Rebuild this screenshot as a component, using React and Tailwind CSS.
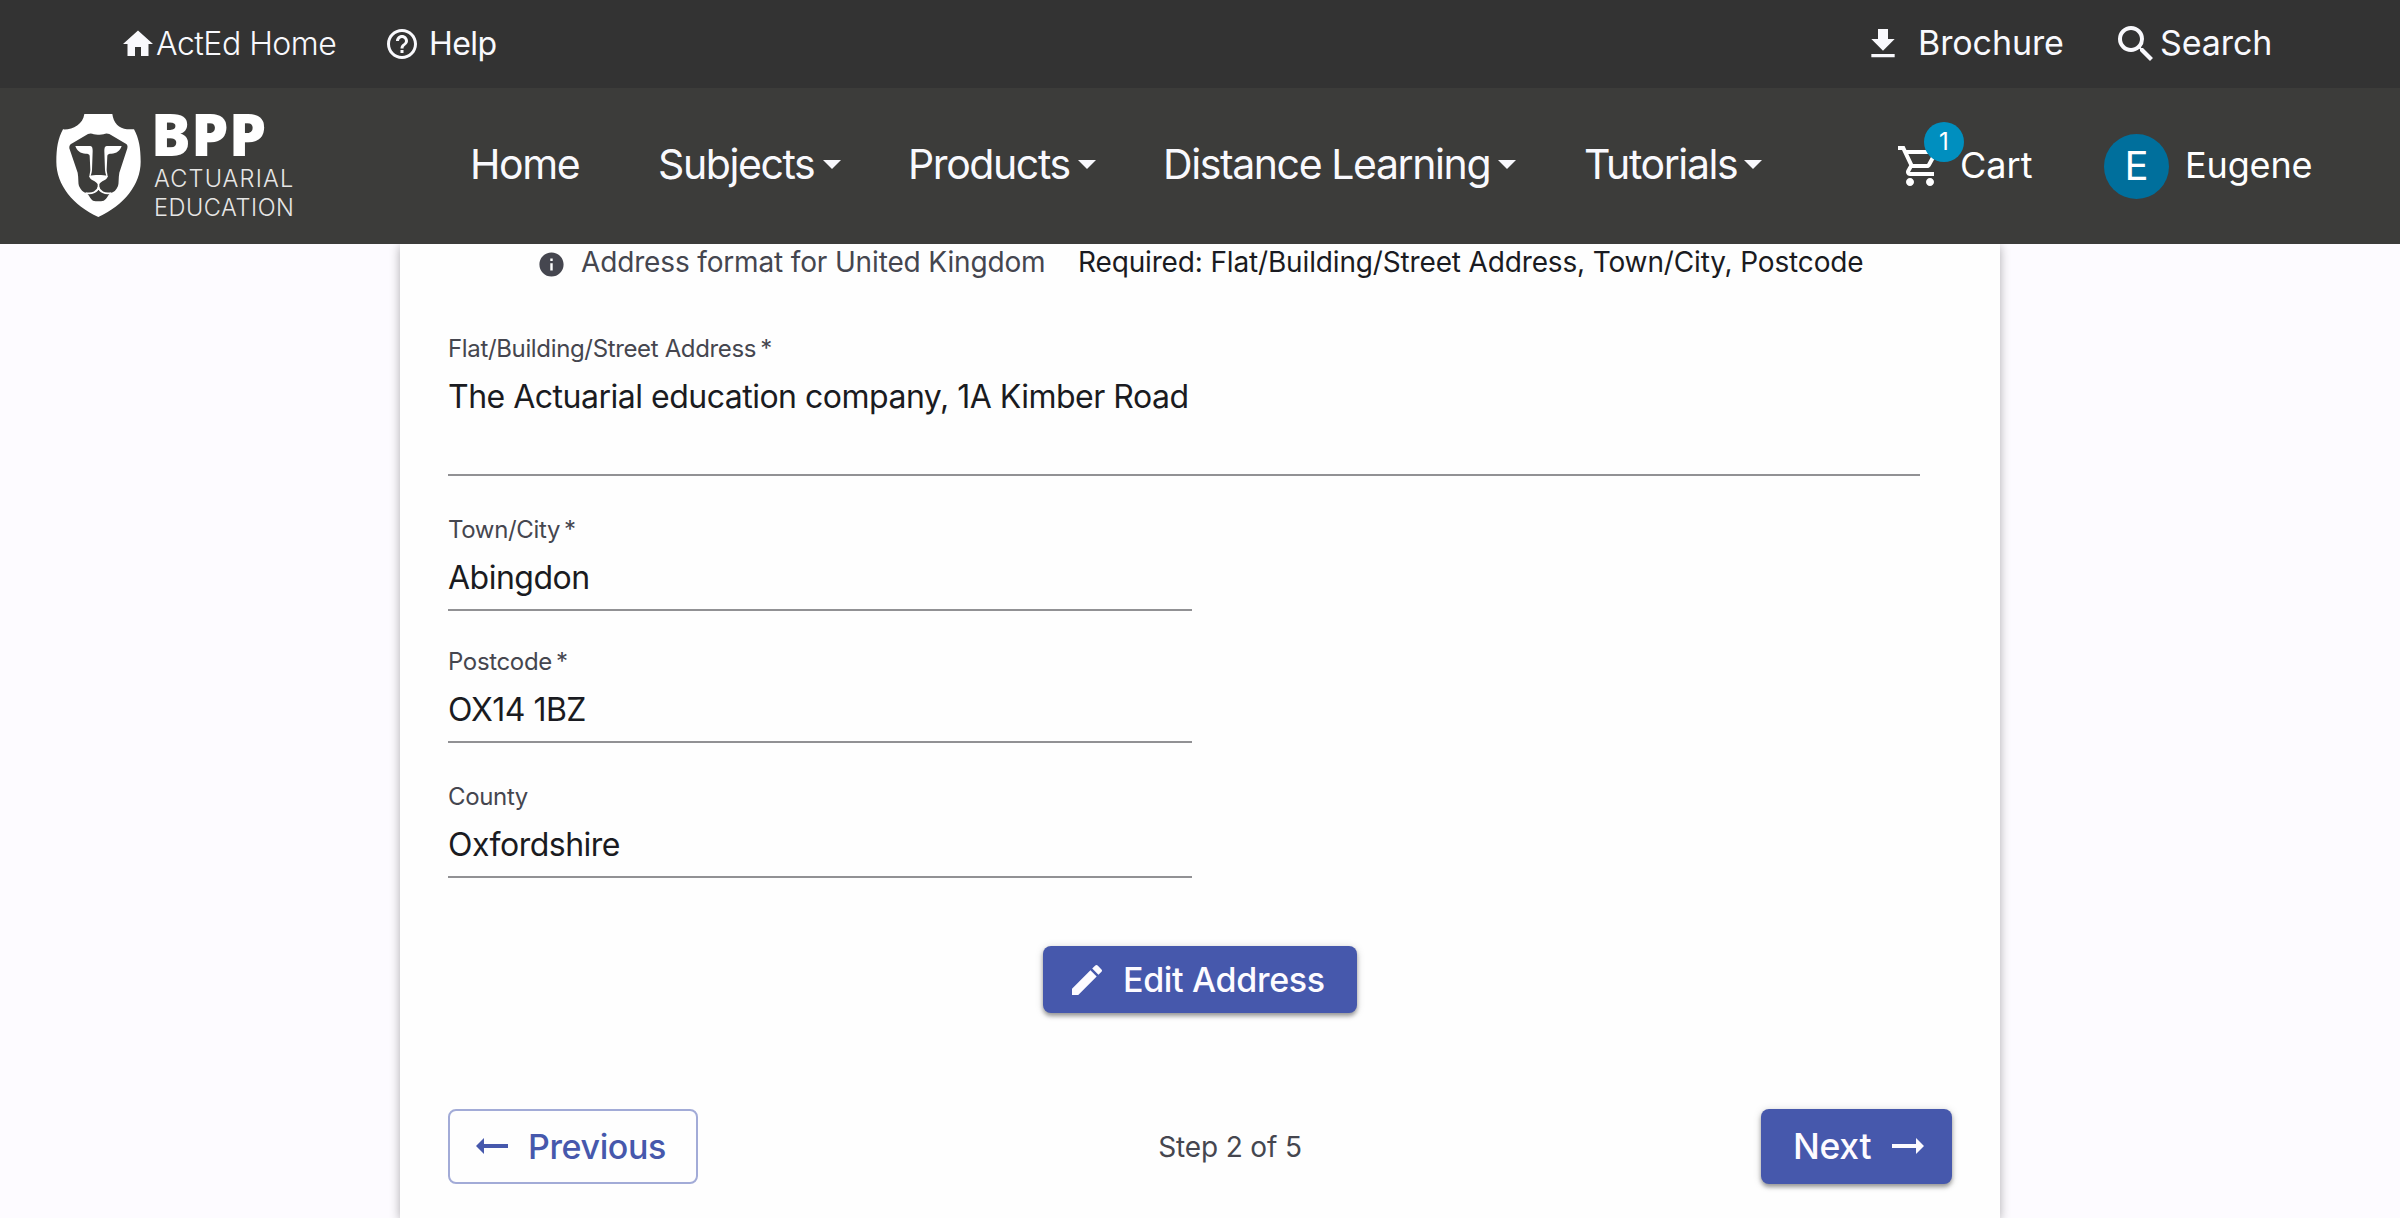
import React from "react";
import {
  MdHome,
  MdHelpOutline,
  MdFileDownload,
  MdSearch,
  MdOutlineShoppingCart,
  MdInfo,
  MdEdit,
  MdArrowRightAlt,
} from "react-icons/md";

const BROW =
  "M75 123H120C126 124 127 130 127 138L125 196C124 206 122 209 121 214L117 217C117 208 120 200 120 194L118 152C117 147 113 146 106 146C90 145 80 138 75 123Z";

function LionShield() {
  return (
    <svg viewBox="18 27 253 309" className="h-[103px] w-[85px] shrink-0" aria-hidden="true">
      <path
        fill="#fff"
        d="M102 27H186C189 53 206 71 230 73H251C266 100 271 130 271 170C271 240 220 300 144 336C68 300 18 240 18 170C18 130 23 100 38 73C65 75 98 59 102 27Z"
      />
      <path
        fill="#3c3c3a"
        d="M57 130C56 122 60 118 66 115L113 87C125 82 130 90 145 89C160 90 165 82 177 87L224 115C230 118 233 122 231 130L207 203C204 220 206 235 203 243C198 256 190 262 180 265C172 270 172 280 160 287C150 289 138 289 128 287C118 280 117 270 109 265C98 262 91 254 86 243C83 235 85 220 82 203Z"
      />
      <path fill="#fff" d={BROW} />
      <path fill="#fff" d={BROW} transform="matrix(-1 0 0 1 289 0)" />
      <path fill="#fff" d="M117 213C130 209 158 209 172 213C172 226 150 228 147 238V250H142V238C139 228 117 226 117 213Z" />
      <path
        fill="none"
        stroke="#fff"
        strokeWidth="5"
        d="M106 264C126 268 142 260 144.500 246C147 260 163 268 183 264"
      />
    </svg>
  );
}

function Caret() {
  return (
    <svg viewBox="0 0 18 9" className="h-[9px] w-[18px] shrink-0" aria-hidden="true">
      <path d="M0 0H18L9 9Z" fill="currentColor" />
    </svg>
  );
}

function NavItem({ label, className, caret = true }) {
  return (
    <a className={`flex items-center justify-between text-[41px] leading-[48px] tracking-[-1.4px] whitespace-nowrap ${className}`}>
      <span>{label}</span>
      {caret && <Caret />}
    </a>
  );
}

function Field({ label, value, required, className = "" }) {
  return (
    <div className={`flex flex-col border-b-2 border-[#919194] ${className}`}>
      <label className="pt-px text-2xl leading-8 tracking-[-0.35px] text-[#45464f]">
        {label}
        {required && <span className="ml-1">*</span>}
      </label>
      <div className="mt-3 text-[32px] leading-10 tracking-[-0.5px] text-[#1a1b21]">{value}</div>
    </div>
  );
}

export default function App() {
  return (
    <div className="flex h-[1218px] w-[2400px] flex-col overflow-hidden bg-[#fdfbff] font-['Inter',sans-serif]">
      <div className="flex h-[88px] shrink-0 items-center justify-between bg-[#333333] pr-[130px] pl-[120px] text-[32px] text-[#f9f9fd]">
        <div className="flex items-center">
          <a className="flex w-[264px] items-center font-light tracking-[-0.5px] whitespace-nowrap">
            <MdHome className="size-9 shrink-0" />
            <span>ActEd Home</span>
          </a>
          <a className="flex items-center gap-[9px] tracking-[-0.6px]">
            <MdHelpOutline className="size-9" />
            <span>Help</span>
          </a>
        </div>
        <div className="flex items-center text-[34px] leading-[44px] tracking-[-0.1px]">
          <a className="flex w-[249px] items-center gap-[15px]">
            <MdFileDownload className="size-10" />
            <span className="mb-[2px]">Brochure</span>
          </a>
          <a className="flex w-[158px] items-center">
            <MdSearch className="size-12 shrink-0" />
            <span className="mb-[2px]">Search</span>
          </a>
        </div>
      </div>

      <header className="relative z-10 flex h-[156px] shrink-0 items-start bg-[#3c3c3a] pl-14 text-[#f9f9fd]">
        <div className="mt-[26px] flex w-[414px] shrink-0 gap-[13px] text-white">
          <LionShield />
          <div className="flex flex-col font-light text-[#e6e6e5]">
            <span className="-mt-[20px] -ml-[3px] font-['Open_Sans',sans-serif] text-[59px] leading-[78px] font-extrabold tracking-[0.5px] text-white">
              BPP
            </span>
            <span className="-mt-[8px] text-[23.5px] leading-[29px] tracking-[1.15px]">ACTUARIAL</span>
            <span className="text-[23.5px] leading-[29px] tracking-[0.55px]">EDUCATION</span>
          </div>
        </div>
        <nav className="mt-[52px] flex">
          <NavItem label="Home" caret={false} className="mr-[80px] w-[108px]" />
          <NavItem label="Subjects" className="mr-[67px] w-[183px]" />
          <NavItem label="Products" className="mr-[67px] w-[188px]" />
          <NavItem label="Distance Learning" className="mr-[68px] w-[353px]" />
          <NavItem label="Tutorials" className="w-[178px]" />
        </nav>
        <a className="relative mt-[54px] ml-[134px] flex w-[208px] items-start gap-4 text-4xl leading-[46px] text-white">
          <MdOutlineShoppingCart className="size-12 shrink-0" />
          <span className="absolute -top-5 left-7 flex size-10 items-center justify-center rounded-full bg-[#008fbf] text-2xl">
            1
          </span>
          <span>Cart</span>
        </a>
        <a className="mt-[46px] flex items-start gap-4 text-4xl text-white">
          <span className="flex size-[65px] items-center justify-center rounded-full bg-[#006f9c] text-[40px]">E</span>
          <span className="mt-2 leading-[46px] tracking-[-0.15px]">Eugene</span>
        </a>
      </header>

      <main className="mx-auto flex w-[1600px] grow flex-col bg-[#fefefe] px-12 shadow-[0_2px_10px_rgba(0,0,0,0.32)]">
        <div className="flex h-9 items-center pl-[89px] text-[28px] tracking-[-0.15px] whitespace-nowrap">
          <MdInfo className="mt-1 mr-[15px] size-[29px] text-[#45464f]" />
          <span className="w-[497px] text-[#45464f]">Address format for United Kingdom</span>
          <span className="text-[#1a1b21]">Required: Flat/Building/Street Address, Town/City, Postcode</span>
        </div>
        <Field
          label="Flat/Building/Street Address"
          value="The Actuarial education company, 1A Kimber Road"
          required
          className="mt-[52px] h-36 w-[1472px]"
        />
        <Field label="Town/City" value="Abingdon" required className="mt-[37px] h-[98px] w-[744px]" />
        <Field label="Postcode" value="OX14 1BZ" required className="mt-[34px] h-[98px] w-[744px]" />
        <Field label="County" value="Oxfordshire" className="mt-[37px] h-[98px] w-[744px]" />
        <button className="mt-[68px] flex h-[67px] w-[314px] items-center gap-4 self-center rounded-lg bg-[#4658ac] pl-6 text-[34px] font-medium tracking-[-0.33px] text-[#fdfbff] shadow-[0_3px_4px_rgba(0,0,0,0.35),0_1px_8px_rgba(0,0,0,0.15)]">
          <MdEdit className="size-10" />
          <span>Edit Address</span>
        </button>
        <div className="mt-24 flex h-[75px] items-center justify-between">
          <button className="flex h-[75px] w-[250px] items-center gap-3 rounded-lg border-2 border-[#a2abd7] pl-[18px] text-[34px] font-medium tracking-[-0.38px] text-[#4658ac]">
            <MdArrowRightAlt className="mb-[2px] size-12 rotate-180" />
            <span>Previous</span>
          </button>
          <span className="ml-px text-[28px] tracking-[-0.15px] text-[#45464f]">Step 2 of 5</span>
          <button className="flex h-[75px] w-[191px] items-center gap-[13px] rounded-lg bg-[#4658ac] pl-8 text-[35.5px] font-medium tracking-[-0.3px] text-[#fdfbff] shadow-[0_3px_4px_rgba(0,0,0,0.35),0_1px_8px_rgba(0,0,0,0.15)]">
            <span>Next</span>
            <MdArrowRightAlt className="mb-[2px] size-12" />
          </button>
        </div>
      </main>
    </div>
  );
}
